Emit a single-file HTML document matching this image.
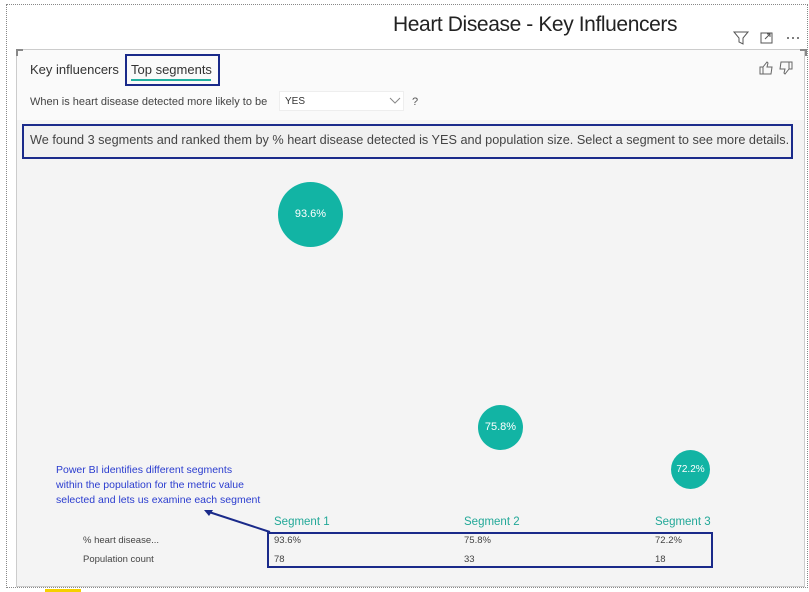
<!DOCTYPE html>
<html><head><style>
body{margin:0;width:809px;height:592px;background:#fff;position:relative;overflow:hidden;font-family:"Liberation Sans",sans-serif;}
.a{position:absolute;}
.dot{border:1px dotted #888;}
</style></head><body>
<div class="a dot" style="left:6px;top:4px;width:800px;height:582px"></div>
<div class="a" style="left:393px;top:13px;font-size:21px;color:#222;letter-spacing:-0.4px">Heart Disease - Key Influencers</div>
<svg class="a" style="left:732px;top:30px" width="72" height="16"><path d="M2 2h14l-5 6v6l-4-2V8z" fill="none" stroke="#555"/><rect x="29" y="3" width="11" height="10" fill="none" stroke="#555"/><path d="M33 9l5-5M35 4h3v3" stroke="#555" fill="none"/><circle cx="56" cy="8" r="1" fill="#555"/><circle cx="61" cy="8" r="1" fill="#555"/><circle cx="66" cy="8" r="1" fill="#555"/></svg>
<div class="a" style="left:16px;top:49px;width:787px;height:536px;border:1px solid #ccc;background:#f4f4f4"></div>
<div class="a" style="left:17px;top:50px;width:787px;height:70px;background:#fafafa"></div>
<div class="a" style="left:16px;top:49px;width:5px;height:5px;border-left:2px solid #888;border-top:2px solid #888"></div>
<div class="a" style="left:800px;top:49px;width:5px;height:5px;border-right:2px solid #888;border-top:2px solid #888"></div>
<div class="a" style="left:30px;top:62px;font-size:13px;color:#333">Key influencers</div>
<div class="a" style="left:125px;top:54px;width:95px;height:32px;border:2px solid #1a2a8a;box-sizing:border-box"></div>
<div class="a" style="left:131px;top:62px;font-size:13px;color:#333">Top segments</div>
<div class="a" style="left:131px;top:79px;width:80px;height:2px;background:#22b0a0"></div>
<svg class="a" style="left:758px;top:60px" width="36" height="16"><path d="M2 7h3v7H2zM5 7l4-5 1 1-1 4h5l-1 7H5" fill="none" stroke="#666"/><path d="M34 9h-3V2h3zM31 9l-4 5-1-1 1-4h-5l1-7h8" fill="none" stroke="#666"/></svg>
<div class="a" style="left:30px;top:96px;font-size:11px;color:#444">When is heart disease detected more likely to be</div>
<div class="a" style="left:279px;top:91px;width:125px;height:20px;background:#fff;border:1px solid #eee;box-sizing:border-box"></div>
<div class="a" style="left:285px;top:96px;font-size:10px;color:#333">YES</div>
<svg class="a" style="left:389px;top:97px" width="12" height="8"><path d="M1 1l5 5 5-5" fill="none" stroke="#888"/></svg>
<div class="a" style="left:412px;top:96px;font-size:11px;color:#555">?</div>
<div class="a" style="left:22px;top:124px;width:771px;height:35px;border:2px solid #1a2a8a;box-sizing:border-box;background:#f0f0f0"></div>
<div class="a" style="left:30px;top:133px;font-size:12.7px;color:#444;white-space:nowrap">We found 3 segments and ranked them by % heart disease detected is YES and population size. Select a segment to see more details.</div>
<div class="a" style="left:278px;top:182px;width:65px;height:65px;border-radius:50%;background:#12b4a4;color:#fff;font-size:11px;text-align:center;line-height:65px">93.6%</div>
<div class="a" style="left:478px;top:405px;width:45px;height:45px;border-radius:50%;background:#12b4a4;color:#fff;font-size:11px;text-align:center;line-height:45px">75.8%</div>
<div class="a" style="left:671px;top:450px;width:39px;height:39px;border-radius:50%;background:#12b4a4;color:#fff;font-size:10px;text-align:center;line-height:39px">72.2%</div>
<div class="a" style="left:56px;top:463px;font-size:10.5px;color:#2a3ccf;line-height:15px">Power BI identifies different segments<br>within the population for the metric value<br>selected and lets us examine each segment</div>
<svg class="a" style="left:200px;top:505px" width="80" height="30"><path d="M70 27L6 6" stroke="#1a2a8a" stroke-width="2"/><path d="M4 5l9 0-4 6z" fill="#1a2a8a"/></svg>
<div class="a" style="left:274px;top:516px;font-size:11.5px;color:#22a898">Segment 1</div>
<div class="a" style="left:464px;top:516px;font-size:11.5px;color:#22a898">Segment 2</div>
<div class="a" style="left:655px;top:516px;font-size:11.5px;color:#22a898">Segment 3</div>
<div class="a" style="left:267px;top:532px;width:446px;height:36px;border:2px solid #1a2a8a;box-sizing:border-box"></div>
<div class="a" style="left:83px;top:535px;font-size:9.5px;color:#444">% heart disease...</div>
<div class="a" style="left:83px;top:554px;font-size:9.5px;color:#444">Population count</div>
<div class="a" style="left:274px;top:535px;font-size:9.5px;color:#444">93.6%</div>
<div class="a" style="left:464px;top:535px;font-size:9.5px;color:#444">75.8%</div>
<div class="a" style="left:655px;top:535px;font-size:9.5px;color:#444">72.2%</div>
<div class="a" style="left:274px;top:554px;font-size:9.5px;color:#444">78</div>
<div class="a" style="left:464px;top:554px;font-size:9.5px;color:#444">33</div>
<div class="a" style="left:655px;top:554px;font-size:9.5px;color:#444">18</div>
<div class="a" style="left:45px;top:589px;width:36px;height:3px;background:#f5d000"></div>
</body></html>
